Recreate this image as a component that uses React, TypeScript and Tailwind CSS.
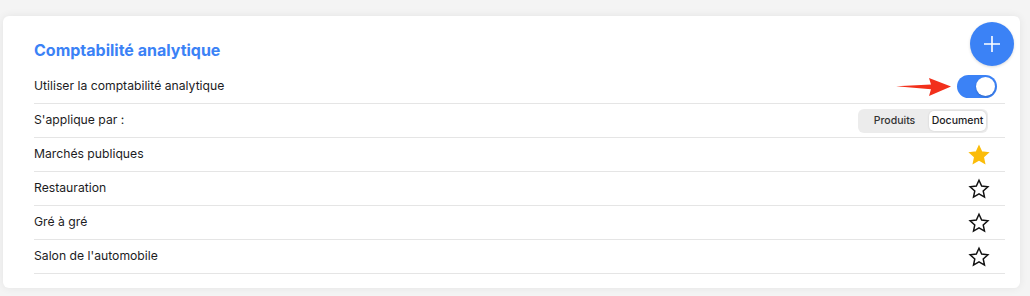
import React from 'react';

type Row = { label: string; starred: boolean };

const rows: Row[] = [
  { label: 'Marchés publiques', starred: true },
  { label: 'Restauration', starred: false },
  { label: 'Gré à gré', starred: false },
  { label: "Salon de l'automobile", starred: false },
];

function Star({ filled }: { filled: boolean }) {
  return (
    <svg width="22" height="22" viewBox="0 0 24 24">
      <path
        d="M12 2.5l2.9 6.3 6.8.7-5.1 4.6 1.4 6.8L12 17.4l-6 3.5 1.4-6.8-5.1-4.6 6.8-.7z"
        fill={filled ? '#fbbc0a' : 'none'}
        stroke={filled ? '#fbbc0a' : '#111'}
        strokeWidth={1.6}
        strokeLinejoin="miter"
      />
    </svg>
  );
}

export default function App() {
  return (
    <div className="w-[1030px] h-[296px] bg-[#f4f4f4] pt-[16px] pl-[3px] font-['Inter',sans-serif] text-[#1c1c1e]">
      <div className="relative w-[1017px] h-[272px] bg-white rounded-[6px] shadow-[0_0_8px_rgba(0,0,0,0.07)] pl-[31px] pr-[15px] pt-[24px]">
        {/* floating add button */}
        <button className="absolute right-[6px] top-[6px] w-[44px] h-[44px] rounded-full bg-[#3b82f6] flex items-center justify-center shadow-[0_1px_3px_rgba(0,0,0,0.15)]">
          <svg width="18" height="18" viewBox="0 0 18 18">
            <path d="M9 1v16M1 9h16" stroke="white" strokeWidth="1.6" />
          </svg>
        </button>

        <h2 className="h-[21px] mb-[9px] text-[16px] leading-[21px] font-bold text-[#3b82f6]">Comptabilité analytique</h2>

        <div className="flex items-center justify-between h-[34px] border-b border-[#e5e5e5] text-[12.2px]">
          <span>Utiliser la comptabilité analytique</span>
          <div className="flex items-center pr-[8px]">
            <svg width="58" height="22" viewBox="0 0 58 22" className="mr-[4px]">
              <path d="M1 10.3 L36 8.6 L34 2 L56 10.5 L34 20 L36 13.2 Z" fill="#f2301b" />
            </svg>
            <div className="w-[40px] h-[23px] rounded-full bg-[#3b82f6] flex items-center justify-end pr-[2px]">
              <div className="w-[19px] h-[19px] rounded-full bg-white shadow-[0_1px_2px_rgba(0,0,0,0.2)]" />
            </div>
          </div>
        </div>

        <div className="flex items-center justify-between h-[34px] border-b border-[#e5e5e5] text-[12.2px]">
          <span>S'applique par :</span>
          <div className="mr-[17px] flex items-center w-[130px] h-[24px] rounded-[6px] bg-[#ececec] p-[2px] text-[10.5px] font-medium">
            <span className="flex-1 text-center text-[#333]">Produits</span>
            <span className="w-[57px] h-[20px] flex items-center justify-center rounded-[5px] bg-white shadow-[0_0_2px_rgba(0,0,0,0.15)] text-[#1c1c1e]">Document</span>
          </div>
        </div>

        {rows.map((r) => (
          <div key={r.label} className="flex items-center justify-between h-[34px] border-b border-[#e5e5e5] text-[12.2px]">
            <span>{r.label}</span>
            <div className="pr-[15px] flex items-center">
              <Star filled={r.starred} />
            </div>
          </div>
        ))}
      </div>
    </div>
  );
}
